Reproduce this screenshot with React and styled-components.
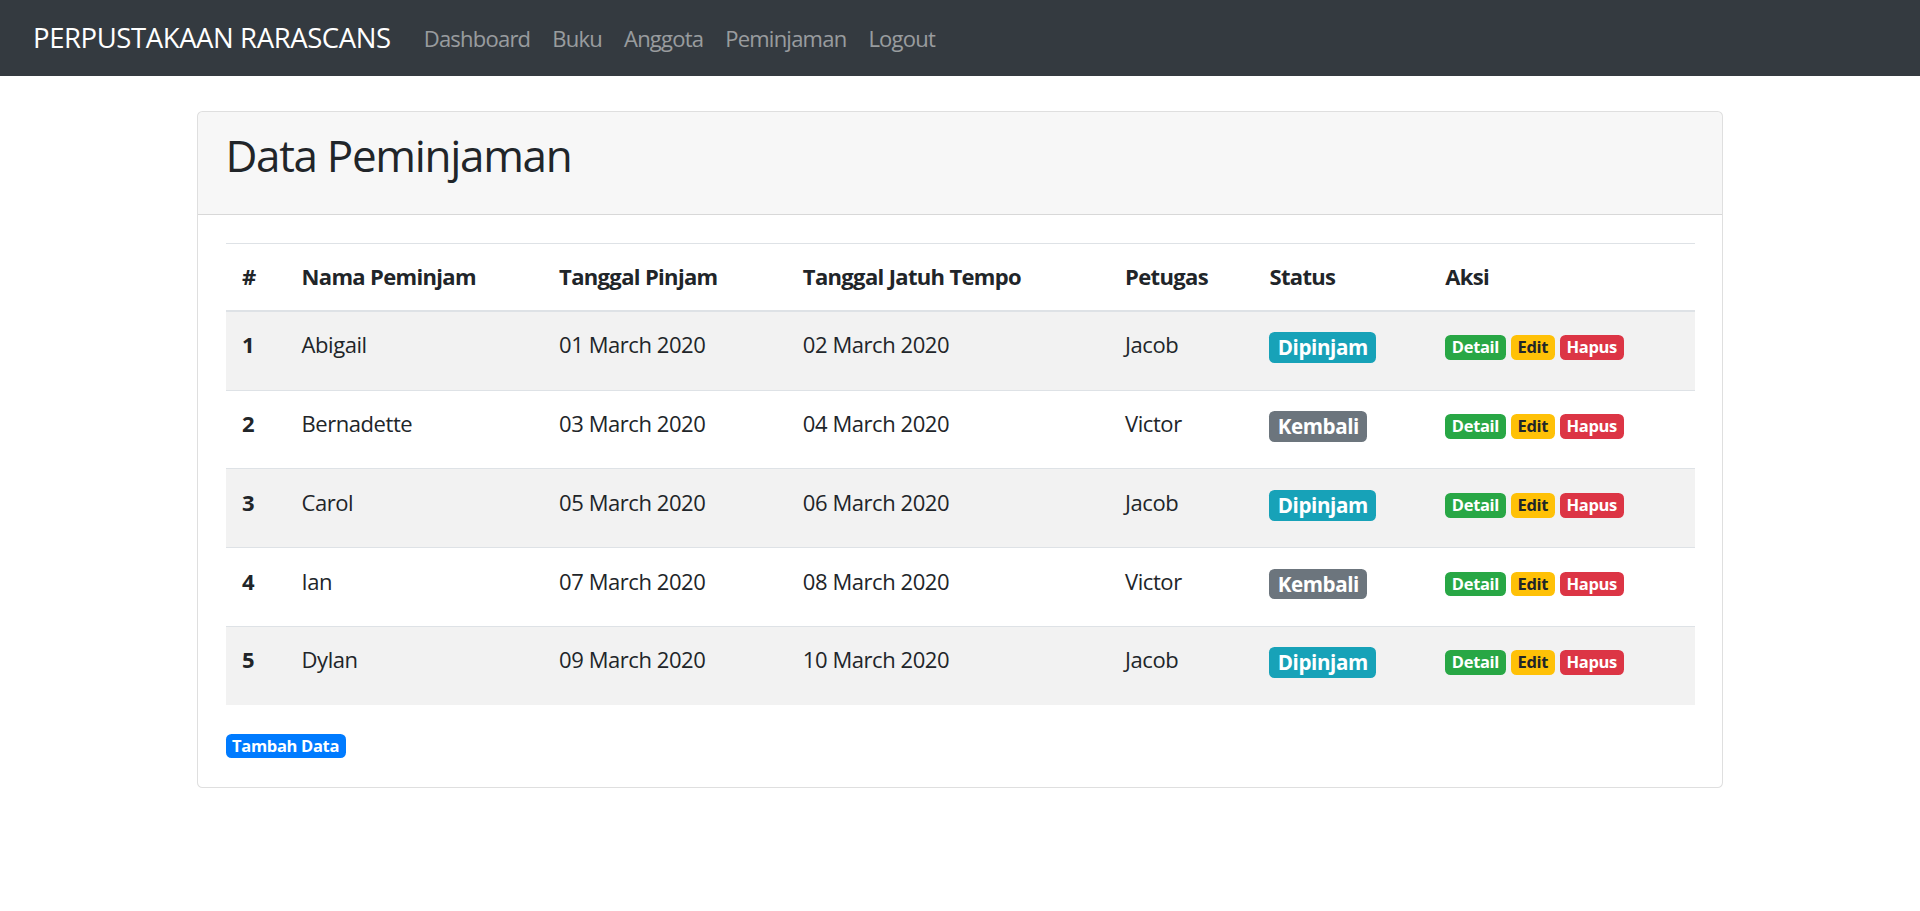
import React from "react";
import styled, { createGlobalStyle } from "styled-components";

const GlobalStyle = createGlobalStyle`
  html, body {
    margin: 0;
    padding: 0;
    background: #ffffff;
  }
  body {
    font-family: "Open Sans", "Noto Sans", "Liberation Sans", sans-serif;
    font-size: 22px;
    line-height: 1.5;
    color: #212529;
  }
  *, *::before, *::after { box-sizing: border-box; }
`;

const Navbar = styled.nav`
  background: #343a40;
  height: 76px;
  display: flex;
  align-items: center;
  padding: 0 22px 0 33px;
`;

const Brand = styled.a`
  color: #ffffff;
  font-size: 27.5px;
  line-height: 1.5;
  margin-right: 22px;
  text-decoration: none;
  white-space: nowrap;
  letter-spacing: -0.015em;
`;

const NavList = styled.ul`
  display: flex;
  list-style: none;
  margin: 0;
  padding: 0;
`;

const NavLink = styled.a`
  display: block;
  padding: 11px 11px;
  color: rgba(255, 255, 255, 0.5);
  font-size: 22px;
  line-height: 33px;
  text-decoration: none;
  letter-spacing: -0.035em;
`;

const Container = styled.main`
  width: 1526px;
  margin: 35px auto 0;
`;

const Card = styled.section`
  border: 1px solid rgba(0, 0, 0, 0.125);
  border-radius: 5.5px;
  background: #fff;
  overflow: hidden;
`;

const CardHeader = styled.header`
  background: rgba(0, 0, 0, 0.03);
  border-bottom: 1px solid rgba(0, 0, 0, 0.125);
  padding: 16.5px 27.5px;
`;

const Title = styled.h2`
  margin: 0 0 16.5px;
  font-size: 44px;
  font-weight: 500;
  line-height: 1.2;
  letter-spacing: -0.03em;
  color: #212529;
`;

const CardBody = styled.div`
  padding: 27.5px;
`;

const Table = styled.table`
  width: 100%;
  border-collapse: collapse;
  table-layout: fixed;
  margin-bottom: 22px;
`;

const Th = styled.th`
  width: ${(p) => p.$w}px;
  padding: 16.5px;
  text-align: left;
  font-weight: 700;
  vertical-align: bottom;
  border-top: 1px solid #dee2e6;
  border-bottom: 2px solid #dee2e6;
  line-height: 33px;
  letter-spacing: -0.03em;
  white-space: nowrap;
`;

const Row = styled.tr`
  background: ${(p) => (p.$striped ? "rgba(0, 0, 0, 0.05)" : "transparent")};
`;

const RowHead = styled.th`
  padding: 16.5px;
  text-align: left;
  font-weight: 700;
  vertical-align: top;
  border-top: 1px solid #dee2e6;
  line-height: 33px;
`;

const Td = styled.td`
  padding: 16.5px;
  vertical-align: top;
  border-top: 1px solid #dee2e6;
  line-height: 33px;
  letter-spacing: -0.02em;
  white-space: nowrap;
`;

const StatusHeading = styled.h5`
  margin: 0 0 11px;
  height: 33.8px;
  font-size: 27.5px;
  font-weight: 500;
  line-height: 1.2;
`;

const palette = {
  primary: ["#007bff", "#fff"],
  secondary: ["#6c757d", "#fff"],
  success: ["#28a745", "#fff"],
  info: ["#17a2b8", "#fff"],
  warning: ["#ffc107", "#212529"],
  danger: ["#dc3545", "#fff"],
};

const Badge = styled.span`
  display: inline-block;
  padding: 0.25em 0.4em;
  font-size: 75%;
  font-weight: 700;
  line-height: 1;
  text-align: center;
  white-space: nowrap;
  vertical-align: baseline;
  border-radius: 5.5px;
  letter-spacing: -0.02em;
  background: ${(p) => palette[p.$variant][0]};
  color: ${(p) => palette[p.$variant][1]};
`;

const Footer = styled.div`
  height: 33px;
  line-height: 33px;
`;

const columns = [
  ["#", 59.5],
  ["Nama Peminjam", 257.4],
  ["Tanggal Pinjam", 243.6],
  ["Tanggal Jatuh Tempo", 322],
  ["Petugas", 144.3],
  ["Status", 175.7],
  ["Aksi", 265.5],
];

const rows = [
  ["Abigail", "01 March 2020", "02 March 2020", "Jacob", "Dipinjam"],
  ["Bernadette", "03 March 2020", "04 March 2020", "Victor", "Kembali"],
  ["Carol", "05 March 2020", "06 March 2020", "Jacob", "Dipinjam"],
  ["Ian", "07 March 2020", "08 March 2020", "Victor", "Kembali"],
  ["Dylan", "09 March 2020", "10 March 2020", "Jacob", "Dipinjam"],
];

export default function App() {
  return (
    <>
      <GlobalStyle />
      <Navbar>
        <Brand href="#">PERPUSTAKAAN RARASCANS</Brand>
        <NavList>
          {["Dashboard", "Buku", "Anggota", "Peminjaman", "Logout"].map((l) => (
            <li key={l}>
              <NavLink href="#">{l}</NavLink>
            </li>
          ))}
        </NavList>
      </Navbar>
      <Container>
        <Card>
          <CardHeader>
            <Title>Data Peminjaman</Title>
          </CardHeader>
          <CardBody>
            <Table>
              <thead>
                <tr>
                  {columns.map(([c, w]) => (
                    <Th key={c} $w={w}>
                      {c}
                    </Th>
                  ))}
                </tr>
              </thead>
              <tbody>
                {rows.map((r, i) => (
                  <Row key={i} $striped={i % 2 === 0}>
                    <RowHead>{i + 1}</RowHead>
                    <Td>{r[0]}</Td>
                    <Td>{r[1]}</Td>
                    <Td>{r[2]}</Td>
                    <Td>{r[3]}</Td>
                    <Td>
                      <StatusHeading>
                        <Badge $variant={r[4] === "Dipinjam" ? "info" : "secondary"}>{r[4]}</Badge>
                      </StatusHeading>
                    </Td>
                    <Td>
                      <Badge $variant="success">Detail</Badge>{" "}
                      <Badge $variant="warning">Edit</Badge>{" "}
                      <Badge $variant="danger">Hapus</Badge>
                    </Td>
                  </Row>
                ))}
              </tbody>
            </Table>
            <Footer>
              <Badge $variant="primary">Tambah Data</Badge>
            </Footer>
          </CardBody>
        </Card>
      </Container>
    </>
  );
}
